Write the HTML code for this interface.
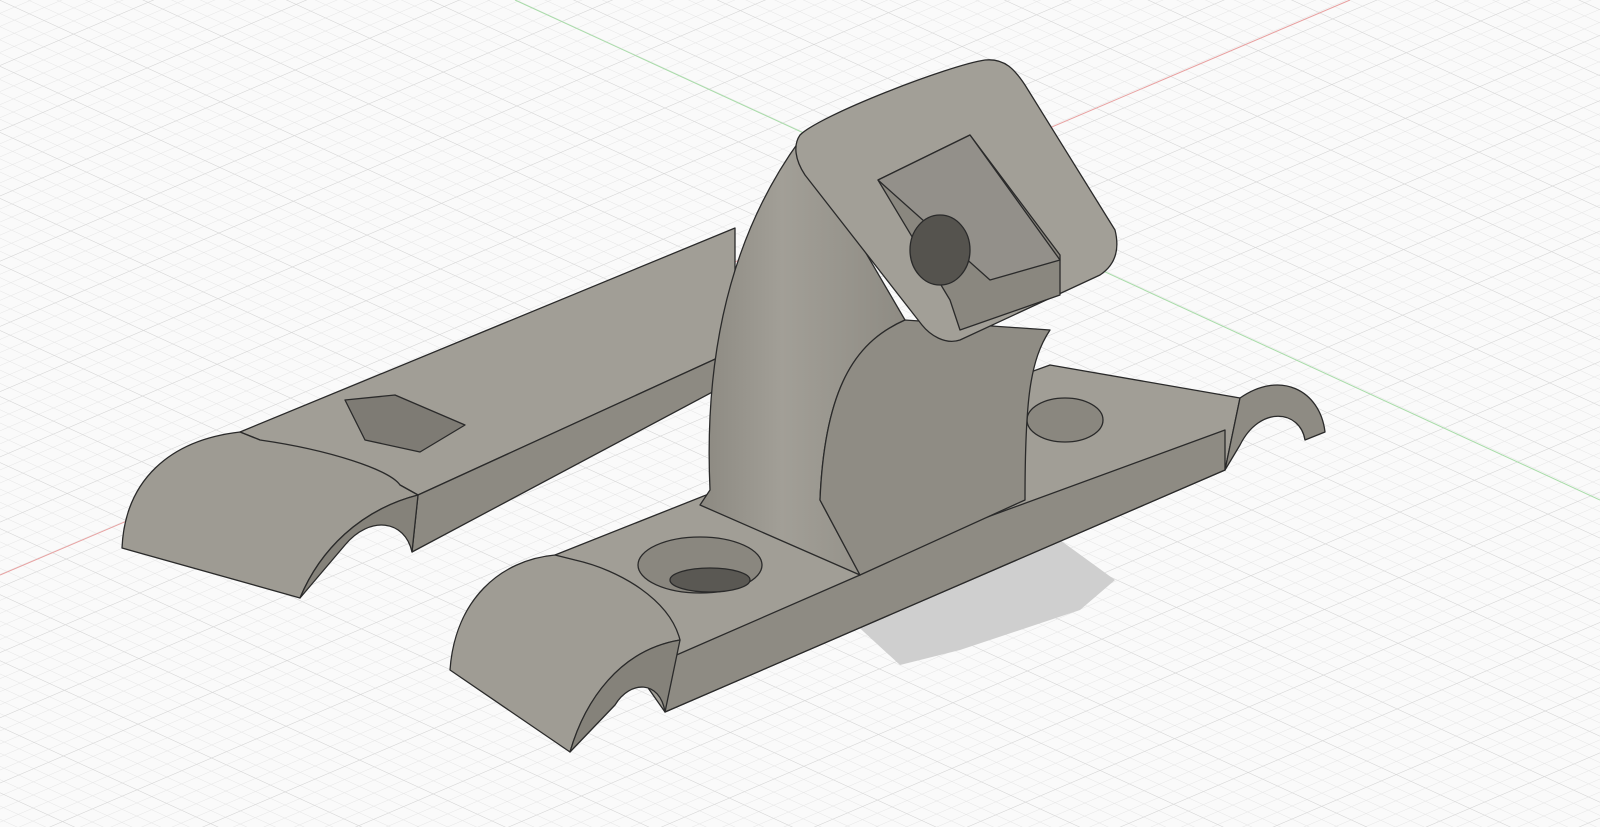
<!DOCTYPE html>
<html><head><meta charset="utf-8"><style>
html,body{margin:0;padding:0;background:#fff;}
svg{display:block}
</style></head><body>
<svg width="1600" height="827" viewBox="0 0 1600 827" xmlns="http://www.w3.org/2000/svg">
<defs>
<pattern id="g1" width="1600" height="12" patternUnits="userSpaceOnUse" patternTransform="rotate(-23.1)">
<line x1="0" y1="0" x2="1600" y2="0" stroke="#e6e6e6" stroke-width="1"/>
</pattern>
<pattern id="g2" width="1600" height="12" patternUnits="userSpaceOnUse" patternTransform="rotate(24.7)">
<line x1="0" y1="0" x2="1600" y2="0" stroke="#e6e6e6" stroke-width="1"/>
</pattern>
<pattern id="G1" width="1600" height="60" patternUnits="userSpaceOnUse" patternTransform="rotate(-23.1)">
<line x1="0" y1="0" x2="1600" y2="0" stroke="#d6d6d6" stroke-width="1"/>
</pattern>
<pattern id="G2" width="1600" height="60" patternUnits="userSpaceOnUse" patternTransform="rotate(24.7)">
<line x1="0" y1="0" x2="1600" y2="0" stroke="#d6d6d6" stroke-width="1"/>
</pattern>
<linearGradient id="arm" x1="0" y1="0" x2="1" y2="0">
<stop offset="0" stop-color="#8c8981"/><stop offset="0.4" stop-color="#a29f97"/><stop offset="1" stop-color="#8e8b83"/>
</linearGradient>
</defs>
<rect width="1600" height="827" fill="#fafafa"/>
<rect width="1600" height="827" fill="url(#g1)"/>
<rect width="1600" height="827" fill="url(#g2)"/>
<rect width="1600" height="827" fill="url(#G1)"/>
<rect width="1600" height="827" fill="url(#G2)"/>
<line x1="0" y1="575" x2="1350" y2="0" stroke="#e8a0a0" stroke-width="1"/>
<line x1="515" y1="0" x2="1600" y2="500" stroke="#a8dca8" stroke-width="1"/>
<!-- shadow -->
<polygon points="840,610 1060,540 1115,580 1080,610 960,650 900,665" fill="#cfcfcf"/>
<g stroke="#2a2a2a" stroke-width="1.3" stroke-linejoin="round">
<!-- left bar -->
<polygon points="240,432 735,228 735,350 418,495 400,485 260,440" fill="#a19e96"/>
<polygon points="418,495 735,350 735,380 412,552" fill="#8d8a82"/>
<path d="M122,548 C125,480 170,440 240,432 L260,440 C330,450 390,470 400,485 L418,495 C360,510 320,550 300,598 Z" fill="#9e9b93"/>
<path d="M300,598 C320,550 360,510 418,495 L412,552 C405,520 370,515 345,545 Z" fill="#85827a"/>
<polygon points="345,400 395,395 465,425 420,452 365,440" fill="#7e7b74"/>
<!-- right base -->
<polygon points="555,555 870,430 1050,365 1240,398 1225,470 665,712" fill="#a19e96"/>
<polygon points="665,712 1225,470 1225,430 870,560 860,575 665,660" fill="#8e8b83"/>
<path d="M450,670 C455,600 500,560 555,555 L575,560 C620,570 670,600 680,640 C620,650 585,700 570,752 Z" fill="#9f9c94"/>
<path d="M570,752 C585,700 620,650 680,640 L665,712 C660,680 630,680 615,705 Z" fill="#85827a"/>
<path d="M1225,470 L1240,398 C1280,370 1320,390 1325,432 L1305,440 C1300,410 1260,405 1240,445 Z" fill="#8e8b83"/>
<ellipse cx="700" cy="565" rx="62" ry="28" fill="#8a877f"/>
<ellipse cx="710" cy="580" rx="40" ry="12" fill="#5a5853"/>
<ellipse cx="1065" cy="420" rx="38" ry="22" fill="#8a877f"/>
<!-- arm -->
<path d="M710,490 C705,380 720,250 800,140 L905,320 C860,340 825,380 820,500 L860,575 L700,505 Z" fill="url(#arm)"/>
<path d="M820,500 C825,380 860,340 905,320 L1050,330 C1030,360 1025,400 1025,500 L860,575 Z" fill="#8f8c84"/>
<!-- head -->
<path d="M800,135 C820,115 950,65 985,60 C1005,58 1015,70 1025,85 L1115,230 C1120,250 1115,265 1100,275 L960,340 C945,345 930,335 922,325 L805,175 C795,160 793,145 800,135 Z" fill="#a29f97"/>
<polygon points="878,180 970,135 1060,255 1060,295 960,330 950,300" fill="#8a877f"/>
<polygon points="878,180 970,135 1060,260 990,280" fill="#93908a"/>
<ellipse cx="940" cy="250" rx="30" ry="35" fill="#55534e"/>
</g>
</svg>
</body></html>
